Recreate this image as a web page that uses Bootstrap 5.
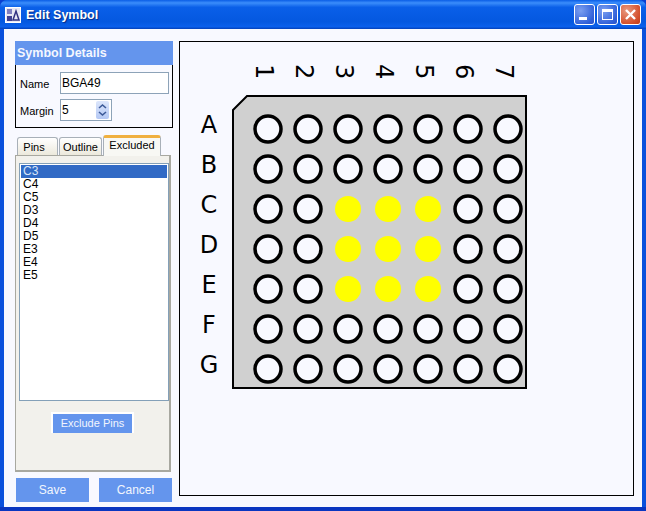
<!DOCTYPE html>
<html lang="en">
<head>
  <meta charset="UTF-8">
  <title>Edit Symbol</title>
  <link href="https://cdn.jsdelivr.net/npm/bootstrap@5.3.5/dist/css/bootstrap.min.css" rel="stylesheet">
  <style>
    html, body { height: 100%; }
    body { background: #0a3fd0; font-family: "Liberation Sans", Arial, sans-serif; font-size: 11px; color: #000; overflow: hidden; }
    .xp-window { width: 646px; height: 511px; background: linear-gradient(90deg, #0a50dc, #1a68f0 50%, #0a50dc); border-bottom: 4px solid #0a36c0; border-radius: 7px 7px 0 0; }
    .xp-title { height: 29px; padding: 0 5px; background: linear-gradient(#0a5de6 0%, #3b8dfb 10%, #0a5fe8 25%, #0458e0 75%, #0a60ec 92%, #0340b8 100%); border-radius: 7px 7px 0 0; }
    .xp-title-text { font-size: 12.5px; font-weight: 700; color: #fff; text-shadow: 1px 1px 1px #0a2a80; margin-left: 5px; padding-top: 1px; }
    .xp-app-icon { width: 16px; height: 16px; }
    .ctl-row { gap: 2px; }
    .xp-ctl { width: 21px; height: 21px; padding: 0; border: 1px solid #fff; border-radius: 3px; background: radial-gradient(circle at 30% 30%, #7b9ff0, #2f5fd8 75%, #2a50c8); }
    .xp-ctl-close { background: radial-gradient(circle at 30% 30%, #e89a80, #d4502c 70%, #c03a18); }
    .xp-ctl svg { display: block; }
    .xp-body { height: 478px; margin: 0 4px; background: #f8f9ff; padding: 12px 8px 11px 11px; gap: 6px; }
    .side-col { width: 158px; flex-shrink: 0; }
    .details-box { height: 63px; border: 1px solid #000; border-top: 0; background: #f8f9ff; padding-top: 7px; }
    .details-head { height: 24px; background: #6495ed; color: #f4f7ff; font-size: 12.5px; font-weight: 700; padding: 5px 2px; margin: 0; }
    .details-row { display: flex; align-items: center; }
    .details-row + .details-row { margin-top: 5px; }
    .field-label { width: 44px; padding: 2px 0 0 4px; margin: 0; font-size: 11px; }
    .field-input { width: 109px; height: 22px; border: 1px solid #8da3b8; border-radius: 0; padding: 0 1px; font-size: 12px; background: #fff; }
    .spin-box { width: 52px; height: 22px; border: 1px solid #8da3b8; background: #fff; font-size: 12px; padding: 0 1px; }
    .spin-btn { width: 13px; height: 18px; border-radius: 2px; margin-right: 1px; background: linear-gradient(#dce6fb, #b4c8f4); }
    .xp-tabs { margin: 7px 0 0 2px; border: 0; height: 20px; gap: 1px; align-items: flex-start; list-style: none; padding: 0; }
    .xp-tab { font-size: 11px; color: #000; background: linear-gradient(#fff, #ece9dc); border: 1px solid #a8b0b8; border-bottom: 0; border-radius: 3px 3px 0 0; height: 18px; line-height: 18px; margin-top: 2px; text-align: center; }
    .tab-pins { width: 41px; padding-right: 7px; }
    .tab-outline { width: 43px; }
    .tab-excluded { width: 58px; height: 21px; margin-top: 0; background: #f8f8f4; border-top: 3px solid #f0b040; line-height: 15px; z-index: 1; position: relative; }
    .tab-pane-box { height: 317px; width: 156px; border: 1px solid #a8a8a0; border-right-width: 2px; border-bottom-width: 2px; background: #f2f1ec; padding: 7px 0 0 3px; }
    .pin-list { width: 150px; height: 238px; border: 1px solid #84a0b8; background: #fff; border-radius: 0; padding: 1px; }
    .pin-item { border: 0; border-radius: 0; background: none; padding: 0 0 0 2px; height: 13px; line-height: 13px; font-size: 12px; color: #000; }
    .pin-item.active { background: #316ac5; color: #d8e4f8; }
    .flat-btn { background: #6495ed; color: #f2f5fd; border: 0; border-radius: 0; font-size: 12px; padding: 0; }
    .flat-btn:hover { background: #6495ed; color: #f2f5fd; }
    .exclude-btn { width: 83px; height: 21px; border: 2px solid #fff; border-bottom-width: 0; font-size: 11px; margin: 11px 0 0 32px; display: block; }
    .foot-row { margin-top: 6px; padding: 0 1px; }
    .foot-btn { width: 73px; height: 24px; }
    .canvas-box { width: 455px; height: 455px; flex-shrink: 0; border: 1px solid #000; background: #f8f9ff; }
    .canvas-box svg { display: block; }
    .pin-label { font-family: "DejaVu Sans", sans-serif; font-size: 24px; fill: #000; }
  </style>
</head>
<body class="m-0">
  <div class="xp-window">
    <div class="xp-title d-flex align-items-center">
      <svg class="xp-app-icon" viewBox="0 0 16 16">
        <rect x="0.5" y="0.5" width="15" height="15" fill="#e8e8f4" stroke="#fff"/>
        <rect x="2" y="2" width="5" height="5" fill="#8080c0"/>
        <path d="M8 13 L11 4 L14 13 Z" fill="none" stroke="#303080" stroke-width="1.5"/>
        <rect x="2" y="9" width="5" height="5" fill="#404090"/>
      </svg>
      <span class="xp-title-text flex-grow-1">Edit Symbol</span>
      <div class="d-flex ctl-row">
        <button class="xp-ctl" type="button" aria-label="Minimize">
          <svg width="19" height="19" viewBox="0 0 19 19"><rect x="4" y="12" width="8" height="3" fill="#fff"/></svg>
        </button>
        <button class="xp-ctl" type="button" aria-label="Maximize">
          <svg width="19" height="19" viewBox="0 0 19 19"><rect x="4.5" y="4.5" width="10" height="10" fill="none" stroke="#fff"/><rect x="4" y="4" width="11" height="3" fill="#fff"/></svg>
        </button>
        <button class="xp-ctl xp-ctl-close" type="button" aria-label="Close">
          <svg width="19" height="19" viewBox="0 0 19 19"><path d="M5 5 L14 14 M14 5 L5 14" stroke="#fff" stroke-width="2.4"/></svg>
        </button>
      </div>
    </div>

    <div class="xp-body d-flex">
      <div class="side-col">
        <h6 class="details-head">Symbol Details</h6>
        <div class="details-box">
          <div class="details-row">
            <label class="field-label" for="symName">Name</label>
            <input class="field-input" id="symName" type="text" value="BGA49">
          </div>
          <div class="details-row">
            <label class="field-label" for="symMargin">Margin</label>
            <div class="spin-box d-flex align-items-center justify-content-between" id="symMargin">
              <span>5</span>
              <span class="spin-btn d-flex flex-column align-items-center justify-content-center">
                <svg width="9" height="14" viewBox="0 0 9 14"><path d="M1 5 L4.5 2 L8 5 M1 9 L4.5 12 L8 9" fill="none" stroke="#3c5a98" stroke-width="1.6"/></svg>
              </span>
            </div>
          </div>
        </div>

        <ul class="xp-tabs d-flex">
          <li class="xp-tab tab-pins">Pins</li>
          <li class="xp-tab tab-outline">Outline</li>
          <li class="xp-tab tab-excluded">Excluded</li>
        </ul>
        <div class="tab-pane-box">
          <ul class="list-group pin-list" id="pinList"></ul>
          <button class="btn flat-btn exclude-btn" type="button">Exclude Pins</button>
        </div>

        <div class="d-flex justify-content-between foot-row">
          <button class="btn flat-btn foot-btn" type="button">Save</button>
          <button class="btn flat-btn foot-btn" type="button">Cancel</button>
        </div>
      </div>

      <div class="canvas-box">
        <svg id="pcb" width="453" height="453" viewBox="180 42 453 453"></svg>
      </div>
    </div>
  </div>

  <script src="https://cdn.jsdelivr.net/npm/bootstrap@5.3.5/dist/js/bootstrap.bundle.min.js"></script>
  <script>
    const pins = ['C3','C4','C5','D3','D4','D5','E3','E4','E5'];
    document.querySelector('#pinList').innerHTML = pins.map((p, i) =>
      `<li class="list-group-item pin-item ${i === 0 ? 'active' : ''}">${p}</li>`).join('');

    // package drawing
    const rows = 'ABCDEFG'.split('');
    let svg = '<path d="M233 110 L247 96 L526 96 L526 388 L233 388 Z" fill="#d0d0d0" stroke="#000" stroke-width="2"/>';
    for (let c = 0; c < 7; c++) {
      const x = 268 + c * 40;
      svg += `<text class="pin-label" transform="translate(${x - 12} 64) rotate(90)">${c + 1}</text>`;
    }
    rows.forEach((r, i) => {
      const y = 129 + i * 40;
      svg += `<text class="pin-label" x="209" y="${y + 4}" text-anchor="middle">${r}</text>`;
      for (let c = 0; c < 7; c++) {
        const x = 268 + c * 40;
        const gone = i >= 2 && i <= 4 && c >= 2 && c <= 4;
        svg += gone
          ? `<circle cx="${x}" cy="${y}" r="13" fill="#ffff00"/>`
          : `<circle cx="${x}" cy="${y}" r="13" fill="#f8f9ff" stroke="#000" stroke-width="3.5"/>`;
      }
    });
    document.querySelector('#pcb').innerHTML = svg;
  </script>
</body>
</html>
